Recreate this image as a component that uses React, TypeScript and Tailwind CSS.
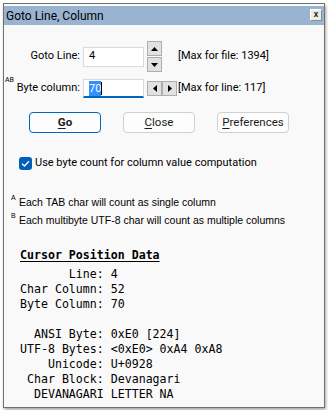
import React from 'react';

const ui = "font-['Roboto','Noto_Sans',sans-serif]";
const mono = "font-['DejaVu_Sans_Mono',monospace]";

const Tri: React.FC<{ dir: 'up' | 'down' | 'left' | 'right' }> = ({ dir }) => {
  const pts = {
    up: '0,4 3.5,0 7,4',
    down: '0,0 3.5,4 7,0',
    left: '4,0 0,3.5 4,7',
    right: '0,0 4,3.5 0,7',
  }[dir];
  const vertical = dir === 'up' || dir === 'down';
  return (
    <svg width={vertical ? 7 : 4} height={vertical ? 4 : 7} viewBox={vertical ? '0 0 7 4' : '0 0 4 7'}>
      <polygon points={pts} fill="#000" />
    </svg>
  );
};

const SpinBtn: React.FC<{ dir: 'up' | 'down' | 'left' | 'right' }> = ({ dir }) => (
  <div className="w-[15px] h-[15px] bg-[#e1e1e1] border border-[#adadad] flex items-center justify-center">
    <Tri dir={dir} />
  </div>
);

const Btn: React.FC<{ first: string; rest: string; primary?: boolean }> = ({ first, rest, primary }) => (
  <button
    className={`w-[72px] h-[21px] rounded-[4px] bg-[#fdfdfd] text-[11.5px] text-[#1b1b1b] flex items-center justify-center ${
      primary ? 'border border-[#0067c0] font-bold' : 'border border-[#d0d0d0]'
    }`}
  >
    <span className="underline underline-offset-2">{first}</span>
    {rest}
  </button>
);

export default function App() {
  return (
    <div className={`w-[328px] h-[410px] bg-white pl-[3px] pt-[3px] ${ui}`}>
      <div className="w-[322px] h-[405px] border border-[#707070] bg-[#f9f9f9] shadow-[1px_2px_3px_rgba(0,0,0,0.35)] pt-[2px] flex flex-col">
        {/* title bar */}
        <div className="h-[19px] bg-[#99b4d1] flex items-center justify-between pl-[2px] pr-[2px]">
          <span className="text-[12px] text-black leading-none">Goto Line, Column</span>
          <div className="w-[12px] h-[12px] mt-[-2px] bg-[#ecebe6] border border-t-white border-l-white border-r-[#8a8a8a] border-b-[#8a8a8a] flex items-center justify-center text-[9px] leading-none text-[#333] font-bold">
            x
          </div>
        </div>

        {/* goto line row */}
        <div className="flex items-center mt-[16px] h-[31px]">
          <div className="w-[76px] text-right text-[11px] text-black">Goto Line:</div>
          <div className="ml-[3px] w-[61px] h-[20px] bg-white border border-[#dadada] flex items-center pl-[5px] text-[11px]">4</div>
          <div className="ml-[3px] flex flex-col gap-[1px]">
            <SpinBtn dir="up" />
            <SpinBtn dir="down" />
          </div>
          <div className="ml-[16px] text-[11px] text-black">[Max for file: 1394]</div>
        </div>

        {/* byte column row */}
        <div className="flex items-center mt-[7px] h-[19px]">
          <div className="w-[76px] flex items-start justify-end relative">
            <span className="absolute left-[1px] top-[-3px] text-[7px] leading-none">AB</span>
            <span className="text-[11px] text-black">Byte column:</span>
          </div>
          <div className="ml-[3px] w-[61px] h-[19px] bg-white border border-[#dadada] border-b-2 border-b-[#0067c0] flex items-center pl-[5px] text-[11px]">
            <span className="bg-[#3390ff] text-white leading-[15px]">70</span>
            <span className="w-px h-[13px] bg-black" />
          </div>
          <div className="ml-[3px] flex">
            <SpinBtn dir="left" />
            <SpinBtn dir="right" />
          </div>
          <div className="ml-px text-[11px] text-black">[Max for line: 117]</div>
        </div>

        {/* buttons */}
        <div className="flex mt-[14px] pl-[25px] gap-[22px]">
          <Btn first="G" rest="o" primary />
          <Btn first="C" rest="lose" />
          <Btn first="P" rest="references" />
        </div>

        {/* checkbox */}
        <div className="flex items-center mt-[22px] pl-[15px] gap-[3px]">
          <div className="w-[13px] h-[13px] rounded-[3px] bg-[#005fb8] flex items-center justify-center">
            <svg width="9" height="7" viewBox="0 0 9 7">
              <path d="M1 3.6 L3.4 6 L8 1.2" stroke="#fff" strokeWidth="1.3" fill="none" />
            </svg>
          </div>
          <span className="text-[11px] text-black">Use byte count for column value computation</span>
        </div>

        {/* notes */}
        <div className="mt-[21px] pl-[7px] font-['Liberation_Sans',sans-serif] text-[10.5px] text-black leading-[18px]">
          <div className="flex">
            <span className="w-[8px] text-[7px] leading-[10px]">A</span>
            <span>Each TAB char will count as single column</span>
          </div>
          <div className="flex">
            <span className="w-[8px] text-[7px] leading-[10px]">B</span>
            <span>Each multibyte UTF-8 char will count as multiple columns</span>
          </div>
        </div>

        {/* cursor data */}
        <div className={`mt-[19px] pl-[16px] ${mono} text-[11.6px] leading-[15px] text-black`}>
          <div className="font-bold underline underline-offset-2 mb-[4px]">Cursor Position Data</div>
          <pre className={`${mono} whitespace-pre`}>{`       Line: 4
Char Column: 52
Byte Column: 70

  ANSI Byte: 0xE0 [224]
UTF-8 Bytes: <0xE0> 0xA4 0xA8
    Unicode: U+0928
 Char Block: Devanagari
  DEVANAGARI LETTER NA`}</pre>
        </div>
      </div>
    </div>
  );
}
